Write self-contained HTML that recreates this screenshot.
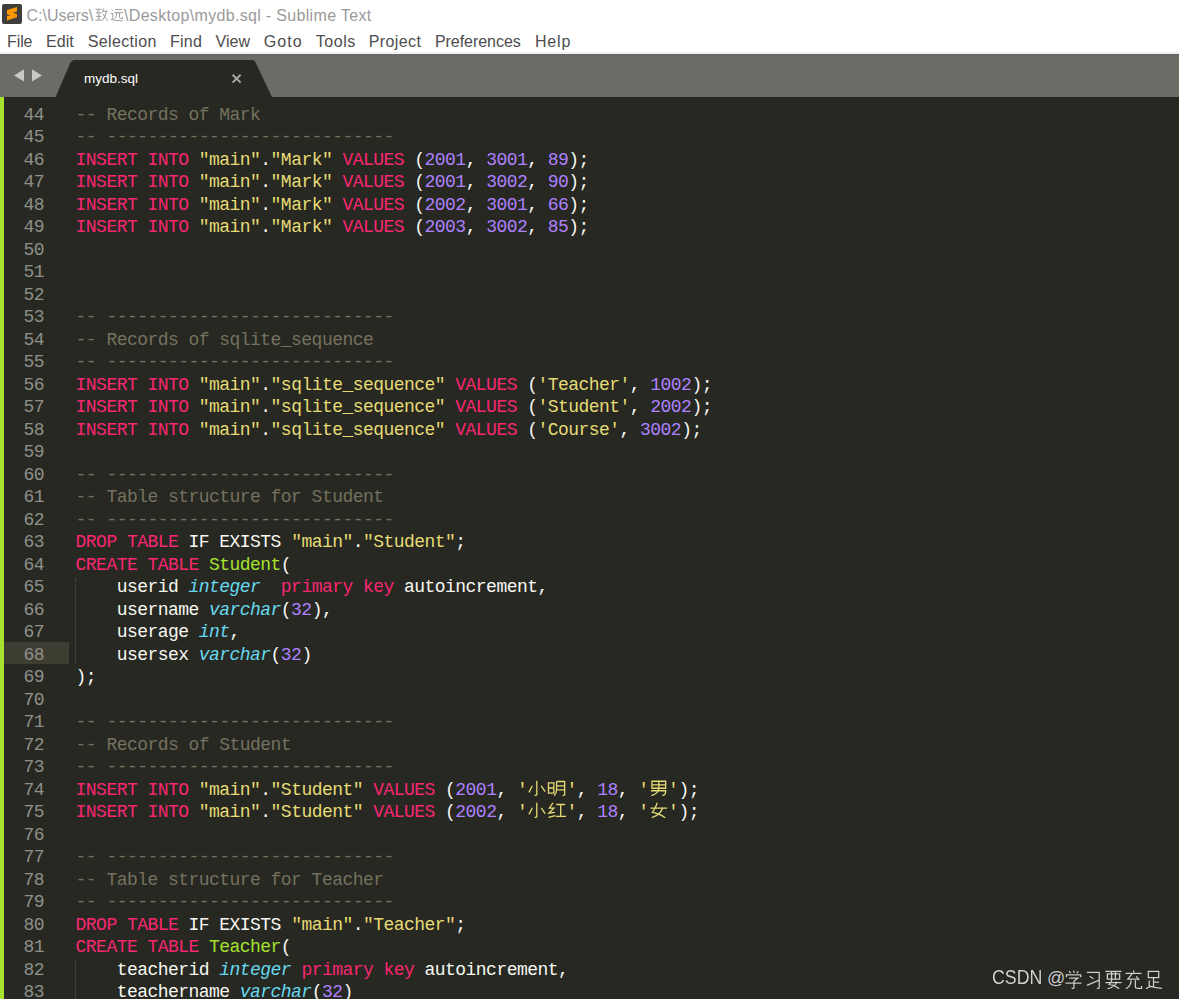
<!DOCTYPE html>
<html><head><meta charset="utf-8">
<style>
*{margin:0;padding:0;box-sizing:border-box}
html,body{width:1179px;height:999px;overflow:hidden;background:#fff}
body{position:relative;font-family:"Liberation Sans",sans-serif}
#icon{position:absolute;left:2px;top:4px;width:20px;height:20px}
.tt{position:absolute;top:5.5px;font-size:16px;line-height:20px;color:#9a9a9a;white-space:pre}
.ttj{position:absolute;top:7px;width:15px;height:15px}
.tj{display:inline-block;width:15px;height:15px;vertical-align:-2px}
.mi{position:absolute;top:32.5px;font-size:16px;line-height:18px;color:#4d4d4d;white-space:nowrap}
#sep1{position:absolute;left:0;top:52px;width:1179px;height:1px;background:#ececec}
#sep2{position:absolute;left:0;top:53px;width:1179px;height:1px;background:#f7f7f7}
#tabbar{position:absolute;left:0;top:54px;width:1179px;height:43px;background:#6c6c67}
#tabbar .tl{position:absolute;left:0;top:0;width:1179px;height:1px;background:#636360}
#tabsvg{position:absolute;left:0;top:0}
#tabname{position:absolute;left:84px;top:70px;font-size:13.5px;line-height:18px;color:#fff;white-space:nowrap}
#editor{position:absolute;left:0;top:97px;width:1179px;height:902px;background:#272822;overflow:hidden}
#gbar{position:absolute;left:0;top:0;width:4px;height:902px;background:#a6e22e}
#hl{position:absolute;left:4px;top:545px;width:65px;height:22px;background:#3e3d32}
.guide{position:absolute;left:75px;width:1px;border-left:1px dotted #56564e}
#gut,#code{position:absolute;top:6.95px;font-family:"Liberation Mono",monospace;font-size:18px;letter-spacing:-0.54px;line-height:22.5px}
#gut{left:0;width:44px;color:#8f908a}
.gn{position:absolute;right:0;height:22.5px;white-space:pre}
#code{left:75.6px;color:#f8f8f2}
.ln{position:absolute;left:0;height:22.5px;white-space:pre}
i{font-style:normal}
i.k{color:#f92672}
i.s{color:#e6db74}
i.n{color:#ae81ff}
i.c{color:#75715e}
i.e{color:#a6e22e}
i.t{color:#66d9ef;font-style:italic}
.cj{display:inline-block;width:19.6px;height:16.5px;vertical-align:-1.5px}
#wm,#wm2{position:absolute;top:966px;font-size:20px;line-height:22px;color:#d2d2d2;white-space:nowrap;text-shadow:0 0 1px #000}
#wm{left:991.7px;transform:scaleX(0.89);transform-origin:0 0}
#wm2{left:1047px;font-size:18px;top:967px}
.wj{position:absolute;top:969.7px;width:19px;height:19.3px;filter:drop-shadow(0 0 0.6px #000)}
.wj path{fill:none;stroke:#d2d2d2;stroke-width:1.3;vector-effect:non-scaling-stroke}
</style></head><body>
<svg id="icon" viewBox="0 0 20 20"><rect x="0" y="0" width="20" height="20" rx="2" fill="#3d3d3d"/><path d="M5 6.1L15 3V7.5L10.9 8.7L15 10V13.3L5 16.4V12L8.9 11.2L5 10.5Z" fill="#ff9800"/></svg>
<div class="tt" style="left:26.5px;letter-spacing:0.0px">C:\Users\</div>
<svg class="ttj" style="left:93.5px" viewBox="0 0 20 20"><path d="M2 3H10M6.5 3L3.5 8.5L9.5 7.5M7.5 6L9.5 8.5M6.5 9V17.5M3 12.5H9.5M2 17.5H10M12.5 2L11.5 7M11.5 5.5H18.5M16.5 5.5Q15.5 13.5 10.5 18.5M12.5 9.5Q14.5 15 18.5 18.5" fill="none" stroke="#959595" stroke-width="1.25"/></svg>
<svg class="ttj" style="left:108.8px" viewBox="0 0 20 20"><path d="M3.5 3L5 5M2 8.5H5V15L2.5 17.5M3.5 16.5Q8 18.5 18.5 18.5M8 3.5H17M7 7.5H18.5M10.5 7.5Q10.5 13 7.5 15.5M14 7.5V14Q14 15.5 18 15.5V13.5" fill="none" stroke="#959595" stroke-width="1.25"/></svg>
<div class="tt" style="left:124px;letter-spacing:0.323px">\Desktop\mydb.sql - Sublime Text</div>
<div class="mi" style="left:7.0px;letter-spacing:-0.10px">File</div>
<div class="mi" style="left:46.0px;letter-spacing:0.07px">Edit</div>
<div class="mi" style="left:87.7px;letter-spacing:0.36px">Selection</div>
<div class="mi" style="left:169.9px;letter-spacing:0.27px">Find</div>
<div class="mi" style="left:215.4px;letter-spacing:0.13px">View</div>
<div class="mi" style="left:263.8px;letter-spacing:1.03px">Goto</div>
<div class="mi" style="left:315.7px;letter-spacing:0.55px">Tools</div>
<div class="mi" style="left:368.7px;letter-spacing:0.40px">Project</div>
<div class="mi" style="left:434.9px;letter-spacing:-0.04px">Preferences</div>
<div class="mi" style="left:534.9px;letter-spacing:0.83px">Help</div>
<div id="sep1"></div><div id="sep2"></div>
<div id="tabbar"><div class="tl"></div>
<svg id="tabsvg" width="1179" height="43" viewBox="0 54 1179 43">
<path d="M14 75.5L24 69.3V81.5Z M32 69.3L42 75.5L32 81.5Z" fill="#c9c9c7"/>
<path d="M55.6 97L70.5 62.5Q71.5 60 74.5 60H252Q254.5 60 255.4 62.2L272 97Z" fill="#272822"/>
<path d="M232.6 74.8L240.6 82.6M240.6 74.8L232.6 82.6" stroke="#a9a9a5" stroke-width="1.9"/>
</svg>
</div>
<div id="tabname">mydb.sql</div>
<div id="editor">
<div id="gbar"></div>
<div id="hl"></div>
<div class="guide" style="top:480.7px;height:85px"></div>
<div class="guide" style="top:863.1px;height:45px"></div>
<div id="gut">
<div class="gn" style="top:0.00px">44</div>
<div class="gn" style="top:22.50px">45</div>
<div class="gn" style="top:45.00px">46</div>
<div class="gn" style="top:67.50px">47</div>
<div class="gn" style="top:90.00px">48</div>
<div class="gn" style="top:112.50px">49</div>
<div class="gn" style="top:135.00px">50</div>
<div class="gn" style="top:157.50px">51</div>
<div class="gn" style="top:180.00px">52</div>
<div class="gn" style="top:202.50px">53</div>
<div class="gn" style="top:225.00px">54</div>
<div class="gn" style="top:247.50px">55</div>
<div class="gn" style="top:270.00px">56</div>
<div class="gn" style="top:292.50px">57</div>
<div class="gn" style="top:315.00px">58</div>
<div class="gn" style="top:337.50px">59</div>
<div class="gn" style="top:360.00px">60</div>
<div class="gn" style="top:382.50px">61</div>
<div class="gn" style="top:405.00px">62</div>
<div class="gn" style="top:427.50px">63</div>
<div class="gn" style="top:450.00px">64</div>
<div class="gn" style="top:472.50px">65</div>
<div class="gn" style="top:495.00px">66</div>
<div class="gn" style="top:517.50px">67</div>
<div class="gn" style="top:540.00px">68</div>
<div class="gn" style="top:562.50px">69</div>
<div class="gn" style="top:585.00px">70</div>
<div class="gn" style="top:607.50px">71</div>
<div class="gn" style="top:630.00px">72</div>
<div class="gn" style="top:652.50px">73</div>
<div class="gn" style="top:675.00px">74</div>
<div class="gn" style="top:697.50px">75</div>
<div class="gn" style="top:720.00px">76</div>
<div class="gn" style="top:742.50px">77</div>
<div class="gn" style="top:765.00px">78</div>
<div class="gn" style="top:787.50px">79</div>
<div class="gn" style="top:810.00px">80</div>
<div class="gn" style="top:832.50px">81</div>
<div class="gn" style="top:855.00px">82</div>
<div class="gn" style="top:877.50px">83</div>
</div>
<div id="code">
<div class="ln" style="top:0.00px"><i class="c">-- Records of Mark</i></div>
<div class="ln" style="top:22.50px"><i class="c">-- ----------------------------</i></div>
<div class="ln" style="top:45.00px"><i class="k">INSERT</i> <i class="k">INTO</i> <i class="s">"main"</i>.<i class="s">"Mark"</i> <i class="k">VALUES</i> (<i class="n">2001</i>, <i class="n">3001</i>, <i class="n">89</i>);</div>
<div class="ln" style="top:67.50px"><i class="k">INSERT</i> <i class="k">INTO</i> <i class="s">"main"</i>.<i class="s">"Mark"</i> <i class="k">VALUES</i> (<i class="n">2001</i>, <i class="n">3002</i>, <i class="n">90</i>);</div>
<div class="ln" style="top:90.00px"><i class="k">INSERT</i> <i class="k">INTO</i> <i class="s">"main"</i>.<i class="s">"Mark"</i> <i class="k">VALUES</i> (<i class="n">2002</i>, <i class="n">3001</i>, <i class="n">66</i>);</div>
<div class="ln" style="top:112.50px"><i class="k">INSERT</i> <i class="k">INTO</i> <i class="s">"main"</i>.<i class="s">"Mark"</i> <i class="k">VALUES</i> (<i class="n">2003</i>, <i class="n">3002</i>, <i class="n">85</i>);</div>
<div class="ln" style="top:135.00px"></div>
<div class="ln" style="top:157.50px"></div>
<div class="ln" style="top:180.00px"></div>
<div class="ln" style="top:202.50px"><i class="c">-- ----------------------------</i></div>
<div class="ln" style="top:225.00px"><i class="c">-- Records of sqlite_sequence</i></div>
<div class="ln" style="top:247.50px"><i class="c">-- ----------------------------</i></div>
<div class="ln" style="top:270.00px"><i class="k">INSERT</i> <i class="k">INTO</i> <i class="s">"main"</i>.<i class="s">"sqlite_sequence"</i> <i class="k">VALUES</i> (<i class="s">'Teacher'</i>, <i class="n">1002</i>);</div>
<div class="ln" style="top:292.50px"><i class="k">INSERT</i> <i class="k">INTO</i> <i class="s">"main"</i>.<i class="s">"sqlite_sequence"</i> <i class="k">VALUES</i> (<i class="s">'Student'</i>, <i class="n">2002</i>);</div>
<div class="ln" style="top:315.00px"><i class="k">INSERT</i> <i class="k">INTO</i> <i class="s">"main"</i>.<i class="s">"sqlite_sequence"</i> <i class="k">VALUES</i> (<i class="s">'Course'</i>, <i class="n">3002</i>);</div>
<div class="ln" style="top:337.50px"></div>
<div class="ln" style="top:360.00px"><i class="c">-- ----------------------------</i></div>
<div class="ln" style="top:382.50px"><i class="c">-- Table structure for Student</i></div>
<div class="ln" style="top:405.00px"><i class="c">-- ----------------------------</i></div>
<div class="ln" style="top:427.50px"><i class="k">DROP</i> <i class="k">TABLE</i> IF EXISTS <i class="s">"main"</i>.<i class="s">"Student"</i>;</div>
<div class="ln" style="top:450.00px"><i class="k">CREATE</i> <i class="k">TABLE</i> <i class="e">Student</i>(</div>
<div class="ln" style="top:472.50px">    userid <i class="t">integer</i>  <i class="k">primary</i> <i class="k">key</i> autoincrement,</div>
<div class="ln" style="top:495.00px">    username <i class="t">varchar</i>(<i class="n">32</i>),</div>
<div class="ln" style="top:517.50px">    userage <i class="t">int</i>,</div>
<div class="ln" style="top:540.00px">    usersex <i class="t">varchar</i>(<i class="n">32</i>)</div>
<div class="ln" style="top:562.50px">);</div>
<div class="ln" style="top:585.00px"></div>
<div class="ln" style="top:607.50px"><i class="c">-- ----------------------------</i></div>
<div class="ln" style="top:630.00px"><i class="c">-- Records of Student</i></div>
<div class="ln" style="top:652.50px"><i class="c">-- ----------------------------</i></div>
<div class="ln" style="top:675.00px"><i class="k">INSERT</i> <i class="k">INTO</i> <i class="s">"main"</i>.<i class="s">"Student"</i> <i class="k">VALUES</i> (<i class="n">2001</i>, <i class="s">'<svg class="cj" viewBox="0 0 20 20" preserveAspectRatio="none"><path d="M10 1V17.5Q10 19 7.8 18.3M5.5 7L2 15M14.5 7L18.5 14" fill="none" stroke="currentColor" stroke-width="1.3" vector-effect="non-scaling-stroke"/></svg><svg class="cj" viewBox="0 0 20 20" preserveAspectRatio="none"><path d="M1.5 3.5H7V16H1.5ZM1.5 9.7H7M9.8 1.8V11Q9.8 16.5 7.3 19M9.8 1.8H18V17.5Q18 19 16 18.6M9.8 7H18M9.8 12H18" fill="none" stroke="currentColor" stroke-width="1.3" vector-effect="non-scaling-stroke"/></svg>'</i>, <i class="n">18</i>, <i class="s">'<svg class="cj" viewBox="0 0 20 20" preserveAspectRatio="none"><path d="M3 1.5H17V10H3ZM10 1.5V10M3 5.8H17M2 13H17Q17 19 13.5 18.5M10 10Q9.5 16.5 2.5 19" fill="none" stroke="currentColor" stroke-width="1.3" vector-effect="non-scaling-stroke"/></svg>'</i>);</div>
<div class="ln" style="top:697.50px"><i class="k">INSERT</i> <i class="k">INTO</i> <i class="s">"main"</i>.<i class="s">"Student"</i> <i class="k">VALUES</i> (<i class="n">2002</i>, <i class="s">'<svg class="cj" viewBox="0 0 20 20" preserveAspectRatio="none"><path d="M10 1V17.5Q10 19 7.8 18.3M5.5 7L2 15M14.5 7L18.5 14" fill="none" stroke="currentColor" stroke-width="1.3" vector-effect="non-scaling-stroke"/></svg><svg class="cj" viewBox="0 0 20 20" preserveAspectRatio="none"><path d="M6 1L2.5 7.5H7L2 13.5L8 12.5M1.5 18.5L8.5 16.5M9.5 3H18.5M14 3V17.5M9 17.5H19.5" fill="none" stroke="currentColor" stroke-width="1.3" vector-effect="non-scaling-stroke"/></svg>'</i>, <i class="n">18</i>, <i class="s">'<svg class="cj" viewBox="0 0 20 20" preserveAspectRatio="none"><path d="M8.5 1Q6.5 8 3.5 12.5Q11 14 16.5 19M14 6.5Q12.5 15 3 19M1.5 7.5H18.5" fill="none" stroke="currentColor" stroke-width="1.3" vector-effect="non-scaling-stroke"/></svg>'</i>);</div>
<div class="ln" style="top:720.00px"></div>
<div class="ln" style="top:742.50px"><i class="c">-- ----------------------------</i></div>
<div class="ln" style="top:765.00px"><i class="c">-- Table structure for Teacher</i></div>
<div class="ln" style="top:787.50px"><i class="c">-- ----------------------------</i></div>
<div class="ln" style="top:810.00px"><i class="k">DROP</i> <i class="k">TABLE</i> IF EXISTS <i class="s">"main"</i>.<i class="s">"Teacher"</i>;</div>
<div class="ln" style="top:832.50px"><i class="k">CREATE</i> <i class="k">TABLE</i> <i class="e">Teacher</i>(</div>
<div class="ln" style="top:855.00px">    teacherid <i class="t">integer</i> <i class="k">primary</i> <i class="k">key</i> autoincrement,</div>
<div class="ln" style="top:877.50px">    teachername <i class="t">varchar</i>(<i class="n">32</i>)</div>
</div>
</div>
<div id="wm">CSDN</div><div id="wm2">@</div>
<svg class="wj" style="left:1064.3px" viewBox="0 0 20 20" preserveAspectRatio="none"><path d="M5.5 1L7 3.5M10 0.5L10.8 3M15 1L13.5 3.5M2.5 7.5V5H17.5V7.5M5.5 8.5H14.5L10.5 11.5M10.5 11.5V18Q10.5 19.5 8 19M1.5 13.5H18.5"/></svg>
<svg class="wj" style="left:1084.3px" viewBox="0 0 20 20" preserveAspectRatio="none"><path d="M3 2.5H16V17.5Q16 19.5 13.5 19M6 6.5L10 9M3 16L16 10.5"/></svg>
<svg class="wj" style="left:1104px" viewBox="0 0 20 20" preserveAspectRatio="none"><path d="M1.5 1.5H18.5M3.5 4H16.5V9.5H3.5ZM8 1.5V9.5M12 1.5V9.5M8.5 9.5Q7.5 13 5.5 15Q12 16 16 19.5M13.5 12Q12 17.5 3.5 19.5M1.5 13H18.5"/></svg>
<svg class="wj" style="left:1124.3px" viewBox="0 0 20 20" preserveAspectRatio="none"><path d="M10 0.5L10.5 2.5M1.5 3.5H18.5M8.5 4L4 9.5H15M13 6.5L16 10.5M7.5 10.5Q7.5 16.5 2 19.5M12 10.5V17.5Q12 19 14 19H18.5V16.5"/></svg>
<svg class="wj" style="left:1143.6px" viewBox="0 0 20 20" preserveAspectRatio="none"><path d="M4.5 1.5H15.5V8H4.5ZM10 8V17M10 12.5H16M5.5 11V17.5M2 19.5Q5 17.5 7 17Q12 18.5 19 19"/></svg>
</body></html>
